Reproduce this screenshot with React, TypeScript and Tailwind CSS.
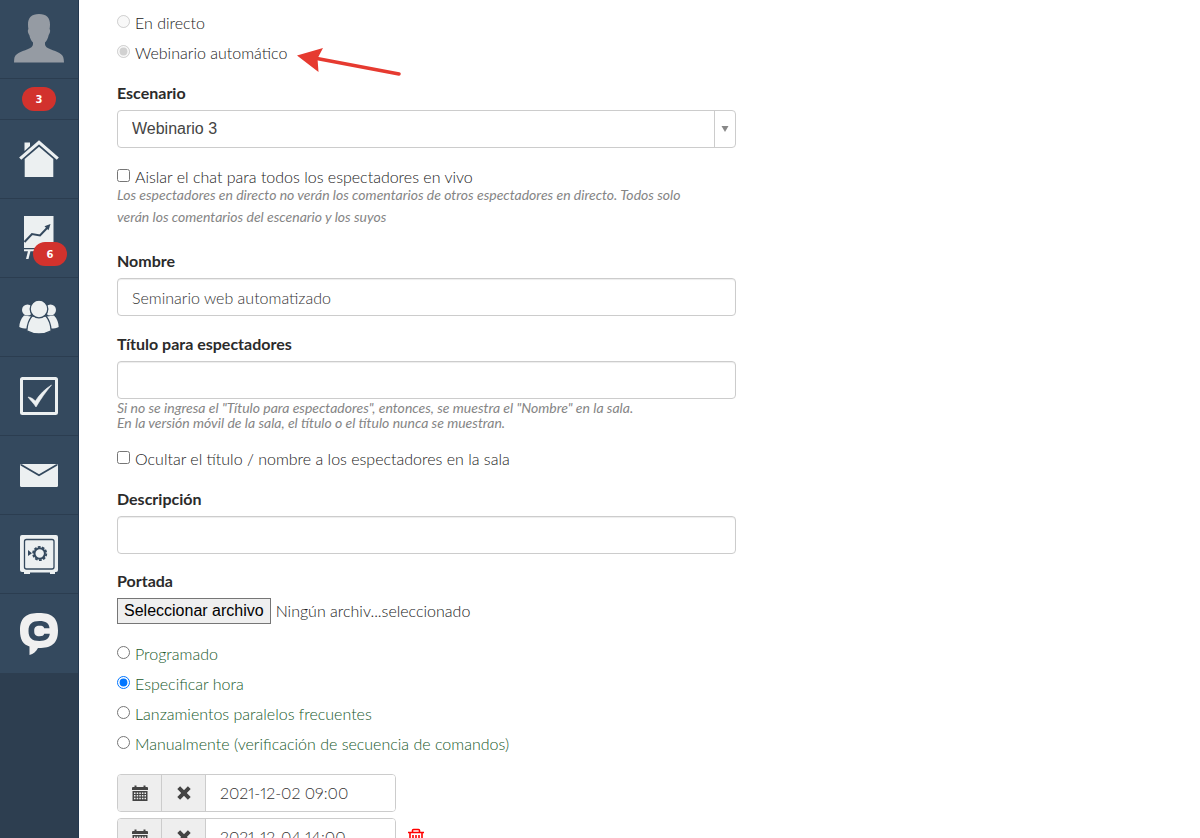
import { useRef, type ReactNode, type InputHTMLAttributes } from "react";

const iconBox = "flex h-[79px] items-center justify-center border-b border-[#2b3d50]";

function Badge({ children }: { children: ReactNode }) {
  return (
    <span className="flex h-6 w-[34px] items-center justify-center rounded-full bg-[#d2322d] font-['DejaVu_Sans',sans-serif] text-[10px] font-bold text-white">
      {children}
    </span>
  );
}

function NavItem({ label, children }: { label: string; children: ReactNode }) {
  return (
    <a href="#" aria-label={label} className={iconBox}>
      {children}
    </a>
  );
}

function Sidebar() {
  return (
    <aside className="w-[79px] shrink-0 border-r border-[#24384f] bg-[#2d3e50]">
      <nav className="flex flex-col bg-[#34495e]">
        <NavItem label="Perfil">
          <svg viewBox="0 0 50 50" className="h-[50px] w-[50px]" fill="#959ba3">
            <path d="M25 0c7.500 0 11.200 4 11 10.700 0 1.700-.2 3-.4 4.300 1.300 1.500 0 5-.9 6-.8 3.500-2 6-3.700 7.500v1.700c0 2.200 2.300 3.800 5.500 5 6.300 2.400 13 4.300 13.200 10l.3 3.300H0l.2-3.300c.3-5.700 7-7.600 13.300-10 3.200-1.200 5.500-2.800 5.500-5v-1.700c-1.700-1.500-2.900-4-3.700-7.500-.9-1-2.200-4.500-.9-6-.2-1.300-.4-2.600-.4-4.300C13.800 4 17.500 0 25 0z" />
          </svg>
        </NavItem>
        <a href="#" className="flex h-[41px] items-center justify-center border-b border-[#2b3d50]">
          <Badge>3</Badge>
        </a>
        <NavItem label="Inicio">
          <svg viewBox="0 0 40 38" className="h-[38px] w-10" fill="#ecf0f1">
            <path d="M5.500 2.500h5.500v3.500l-5.500 4.900z" />
            <path d="M1.200 18.600 20 2.400l18.800 16.200" fill="none" stroke="#ecf0f1" strokeWidth="3.200" />
            <path d="M20 6.700 34.300 19V37H5.700V19z" />
          </svg>
        </NavItem>
        <a href="#" aria-label="Ventas" className="relative flex h-[79px] items-center justify-center border-b border-[#2b3d50]">
          <svg viewBox="0 0 30 44" className="h-11 w-[30px]" fill="#ecf0f1">
            <path d="M0 0h29.500v32H0z" />
            <path d="m.5 26 7.500-8 8 1.500 8.500-9" fill="none" stroke="#34495e" strokeWidth="2" />
            <path d="m26.500 8-6 2.200 4 4z" fill="#34495e" />
            <path d="M0 33.200h29.500v2H0zM4 35h2.500L4.500 43H2z" />
          </svg>
          <span className="absolute left-[33px] top-[43px]">
            <Badge>6</Badge>
          </span>
        </a>
        <NavItem label="Usuarios">
          <svg viewBox="0 0 40 34" className="h-[34px] w-10" fill="#ecf0f1">
            <circle cx="8.500" cy="10" r="5.500" />
            <circle cx="31.500" cy="10" r="5.500" />
            <path d="M5 15.500C1.800 18.500.4 23 .3 27c2.200 1.200 4.700 1.500 7.700 1.500l4-12zM35 15.500c3.200 3 4.600 7.500 4.700 11.500-2.200 1.200-4.700 1.500-7.700 1.500l-4-12z" />
            <g stroke="#34495e" strokeWidth="1.300">
              <path d="M13 16.200c-3 3.500-4.800 8.500-5.200 14.600 7.200 4.200 17.200 4.200 24.400 0-.4-6.100-2.200-11.100-5.200-14.600z" />
              <circle cx="20" cy="9" r="8.800" />
            </g>
          </svg>
        </NavItem>
        <NavItem label="Tareas">
          <svg viewBox="0 0 38 38" className="h-[38px] w-[38px]">
            <rect x="1.500" y="1.500" width="35" height="35" rx="1" fill="none" stroke="#ecf0f1" strokeWidth="3" />
            <path d="M8 20c3 .5 5 1.700 7.400 4C19.500 17.500 25 12 31.500 8 26 14.500 21 21.500 16 30 13.500 26 10.500 23.500 8 20z" fill="#ecf0f1" stroke="#ecf0f1" strokeWidth=".6" />
          </svg>
        </NavItem>
        <NavItem label="Correo">
          <svg viewBox="0 0 38 23" className="h-[23px] w-[38px]" fill="#ecf0f1">
            <rect width="38" height="23" rx="1.500" />
            <path d="M1 .8 19 11.300 37 .8" fill="none" stroke="#34495e" strokeWidth="1.800" />
          </svg>
        </NavItem>
        <NavItem label="Caja">
          <svg viewBox="0 0 38 39" className="h-[39px] w-[38px]">
            <path d="M2 0h34a2 2 0 0 1 2 2v33a2 2 0 0 1-2 2h-1v2h-5v-1.500H10V39H4v-2H2a2 2 0 0 1-2-2V2a2 2 0 0 1 2-2z" fill="#ecf0f1" />
            <rect x="4.500" y="4.500" width="29.500" height="29.500" rx="2" fill="none" stroke="#34495e" strokeWidth="1.300" />
            <circle cx="19.700" cy="18.500" r="5.200" fill="none" stroke="#34495e" strokeWidth="2" />
            <circle cx="19.700" cy="18.500" r="6.600" fill="none" stroke="#34495e" strokeWidth="1.800" strokeDasharray="2.700 1.450" />
            <path d="m8 15 4 3.300L8 21z" fill="#34495e" />
          </svg>
        </NavItem>
        <a href="#" aria-label="Chat" className="flex h-[79px] items-center justify-center">
          <svg viewBox="0 0 38 42" className="h-[42px] w-[38px]">
            <path d="M19 0c12 0 19 4 19 17.500S31 35 19 35h-1C16 38.500 13.500 41 9.500 42V33.500C3 31.500 0 26.500 0 17.500 0 4 7 0 19 0z" fill="#f0f0f0" />
            <path d="M29.500 15.200h-5.300c-.6-1.900-1.800-2.400-4.700-2.400-3.800 0-5.300 1.400-5.300 5.200s1.500 5.200 5.300 5.200c2.900 0 4.100-.5 4.700-2.400h5.600c-.6 5-4 7.200-10.300 7.200-7.500 0-11-3.200-11-10s3.500-10 11-10c6.300 0 9.700 2.200 10 7.200z" fill="#34495e" />
          </svg>
        </a>
      </nav>
    </aside>
  );
}

function Choice({ label, className = "", ...rest }: { label: string; className?: string } & InputHTMLAttributes<HTMLInputElement>) {
  return (
    <label className={`flex h-[22px] items-start gap-[5px] leading-[22px] ${className}`}>
      <input {...rest} className="mt-[3px] size-[13px] shrink-0" />
      <span>{label}</span>
    </label>
  );
}

const fieldStyle =
  "h-[38px] w-full rounded border border-[#ccc] bg-white px-[14px] text-[#333] shadow-[inset_0_1px_1px_rgba(0,0,0,0.075)]";
const titleStyle = "block h-[22px] font-bold leading-[22px] text-[#2b2b2b]";
const hintStyle = "text-[14px] font-normal italic text-[#858585]";

function CalendarIcon() {
  return (
    <svg viewBox="0 0 16 16" className="size-4" fill="#444">
      <path d="M1 2h1.500V.5h2V2h7V.5h2V2H15a1 1 0 0 1 1 1v2H0V3a1 1 0 0 1 1-1z" />
      <path fillRule="evenodd" d="M.5 6h15v10H.5zM2 7.500V9h1.500V7.500zm2.700 0V9h1.500V7.500zm2.600 0V9h1.500V7.500zm2.600 0V9h1.500V7.500zm2.600 0V9H14V7.500zM2 10v1.500h1.500V10zm2.700 0v1.500h1.500V10zm2.600 0v1.500h1.500V10zm2.600 0v1.500h1.500V10zm2.600 0v1.500H14V10zM2 12.700v1.500h1.500v-1.500zm2.700 0v1.500h1.500v-1.500zm2.600 0v1.500h1.500v-1.500zm2.600 0v1.500h1.500v-1.500zm2.600 0v1.500H14v-1.500z" />
    </svg>
  );
}

function CrossIcon() {
  return (
    <svg viewBox="0 0 14 14" className="size-[14px]" stroke="#444" strokeWidth="4">
      <path d="m1.700 1.700 10.600 10.600M12.300 1.700 1.700 12.300" />
    </svg>
  );
}

function DateRow({ value, removable = false }: { value: string; removable?: boolean }) {
  return (
    <div className="flex items-center gap-3">
      <div className="flex h-[38px] w-[279px] overflow-hidden rounded border border-[#ccc]">
        <button type="button" aria-label="Abrir calendario" className="flex w-11 items-center justify-center border-r border-[#ccc] bg-[#eee]">
          <CalendarIcon />
        </button>
        <button type="button" aria-label="Borrar fecha" className="flex w-11 items-center justify-center border-r border-[#ccc] bg-[#eee]">
          <CrossIcon />
        </button>
        <input
          aria-label="Fecha y hora"
          defaultValue={value}
          className="min-w-0 flex-1 bg-white px-[14px] proportional-nums text-[#333]"
        />
      </div>
      {removable && (
        <button type="button" aria-label="Eliminar">
          <svg viewBox="0 0 16 18" className="h-[18px] w-4" fill="none" stroke="#f00" strokeWidth="1.600">
            <path d="M0 4.500h16M4.500 4V2.500q0-1 1-1h5q1 0 1 1V4M2 4.500v11q0 1.500 1.500 1.500h9q1.500 0 1.500-1.500v-11M5 7v7M8 7v7M11 7v7" />
          </svg>
        </button>
      )}
    </div>
  );
}

export default function App() {
  const file = useRef<HTMLInputElement>(null);
  return (
    <div className="flex h-screen overflow-hidden bg-white font-['Lato',sans-serif] text-[16px] font-light text-[#222]">
      <Sidebar />
      <main className="min-w-0 flex-1 px-[38px] pt-3">
        <form className="flex w-full max-w-[619px] flex-col">
          <div className="flex items-start gap-[10px]">
            <div className="flex flex-col gap-2">
              <Choice type="radio" name="tipo" label="En directo" disabled />
              <Choice type="radio" name="tipo" label="Webinario automático" disabled defaultChecked />
            </div>
            <svg viewBox="0 0 106 32" className="mt-8 h-8 w-[106px]">
              <path d="M20 14.500 102 30" stroke="#e63a30" strokeWidth="3.500" strokeLinecap="round" />
              <path d="M0 11.500 26 4 20.500 14.500 21.500 28z" fill="#e63a30" />
            </svg>
          </div>

          <label htmlFor="escenario" className={`mt-[6px] ${titleStyle}`}>Escenario</label>
          <div className="mt-[6px] flex h-[38px] rounded border border-[#ccc]">
            <select id="escenario" className="min-w-0 flex-1 appearance-none border-r border-[#ccc] px-[14px] font-['Liberation_Sans',sans-serif] text-[#444]">
              <option>Webinario 3</option>
            </select>
            <span className="flex w-5 items-center justify-center">
              <svg viewBox="0 0 8 6" className="h-[6px] w-2" fill="#888"><path d="M.5 0h7L4 6z" /></svg>
            </span>
          </div>

          <Choice type="checkbox" label="Aislar el chat para todos los espectadores en vivo" className="mt-[18px]" />
          <p className={`-mt-1 leading-[22px] ${hintStyle}`}>
            Los espectadores en directo no verán los comentarios de otros espectadores en directo. Todos solo
            <br />
            verán los comentarios del escenario y los suyos
          </p>

          <label htmlFor="nombre" className={`mt-[22px] ${titleStyle}`}>Nombre</label>
          <input id="nombre" defaultValue="Seminario web automatizado" className={`mt-[6px] ${fieldStyle}`} />

          <label htmlFor="titulo" className={`mt-[17px] ${titleStyle}`}>Título para espectadores</label>
          <input id="titulo" className={`mt-[6px] ${fieldStyle}`} />
          <p className={`mt-px leading-[15px] ${hintStyle}`}>
            Si no se ingresa el "Título para espectadores", entonces, se muestra el "Nombre" en la sala.
            <br />
            En la versión móvil de la sala, el título o el título nunca se muestran.
          </p>

          <Choice type="checkbox" label="Ocultar el título / nombre a los espectadores en la sala" className="mt-[18px]" />

          <label htmlFor="descripcion" className={`mt-[18px] ${titleStyle}`}>Descripción</label>
          <input id="descripcion" className={`mt-[6px] ${fieldStyle}`} />

          <label htmlFor="portada" className={`mt-4 ${titleStyle}`}>Portada</label>
          <div className="mt-[6px] flex items-center gap-[5px]">
            <input ref={file} id="portada" type="file" className="hidden" />
            <button
              type="button"
              onClick={() => file.current?.click()}
              className="h-[26px] border border-[#767676] bg-[#efefef] px-[6px] font-['Liberation_Sans',sans-serif] text-black"
            >
              Seleccionar archivo
            </button>
            <span>Ningún archiv...seleccionado</span>
          </div>

          <div className="mt-[19px] flex flex-col gap-2 text-[#205a2c]">
            <Choice type="radio" name="inicio" label="Programado" />
            <Choice type="radio" name="inicio" label="Especificar hora" defaultChecked />
            <Choice type="radio" name="inicio" label="Lanzamientos paralelos frecuentes" />
            <Choice type="radio" name="inicio" label="Manualmente (verificación de secuencia de comandos)" />
          </div>

          <div className="mt-[19px] flex flex-col gap-[6px]">
            <DateRow value="2021-12-02 09:00" />
            <DateRow value="2021-12-04 14:00" removable />
          </div>
        </form>
      </main>
    </div>
  );
}
